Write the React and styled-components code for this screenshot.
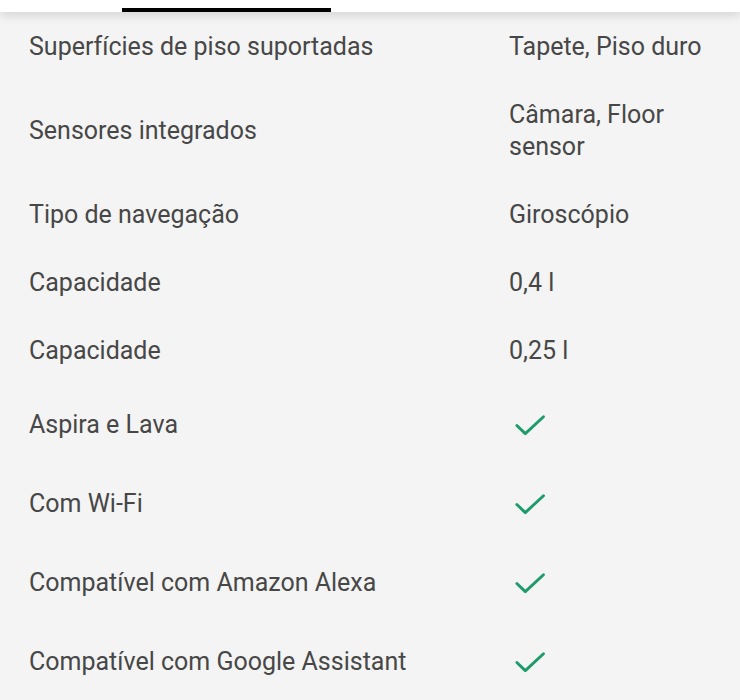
import styled, { createGlobalStyle } from 'styled-components'

const Global = createGlobalStyle`
  html, body {
    margin: 0;
    padding: 0;
    background: #f4f4f4;
  }
  body {
    font-family: Roboto, "Noto Sans", Arial, sans-serif;
    color: #474747;
  }
`

// lista de especificaciones del producto
const specs = [
  { label: 'Superfícies de piso suportadas', value: 'Tapete, Piso duro' },
  { label: 'Sensores integrados', value: 'Câmara, Floor sensor' },
  { label: 'Tipo de navegação', value: 'Giroscópio' },
  { label: 'Capacidade', value: '0,4 l' },
  { label: 'Capacidade', value: '0,25 l' },
  { label: 'Aspira e Lava', check: true },
  { label: 'Com Wi-Fi', check: true },
  { label: 'Compatível com Amazon Alexa', check: true },
  { label: 'Compatível com Google Assistant', check: true },
]

function Check() {
  return (
    <svg width="39" height="39" viewBox="0 0 24 24" fill="none">
      <path d="M3.6 12.6l5.2 5L20 7.2" stroke="#1e9b6b" strokeWidth="1.8" strokeLinecap="round" strokeLinejoin="round" />
    </svg>
  )
}

export default function App() {
  return (
    <Page>
      <Global />
      <TabBar>
        <Indicator />
      </TabBar>
      <List>
        {specs.map((s, i) => (
          <Row key={i}>
            <Label>{s.label}</Label>
            <Value>{s.check ? <Check /> : s.value}</Value>
          </Row>
        ))}
      </List>
    </Page>
  )
}

const Page = styled.div`
  width: 740px;
  height: 700px;
  overflow: hidden;
  background: #f4f4f4;
`

const TabBar = styled.div`
  height: 12px;
  background: #fff;
  display: flex;
  align-items: flex-end;
  padding-left: 122px;
  box-shadow: 0 4px 10px rgba(0, 0, 0, 0.12);
  position: relative;
  z-index: 1;
`

const Indicator = styled.div`
  width: 209px;
  height: 4px;
  background: #000;
`

const List = styled.div`
  display: flex;
  flex-direction: column;
  padding-top: 1px;
`

const Row = styled.div`
  display: grid;
  grid-template-columns: 480px 1fr;
  align-items: center;
  padding: 18px 29px;
  min-height: 32px;
  font-size: 25px;
  line-height: 32px;
`

const Label = styled.div`
  white-space: nowrap;
`

const Value = styled.div`
  display: flex;
  align-items: center;
  margin-right: -12px;

  svg {
    margin: 2px 0 2px 2px;
  }
`
